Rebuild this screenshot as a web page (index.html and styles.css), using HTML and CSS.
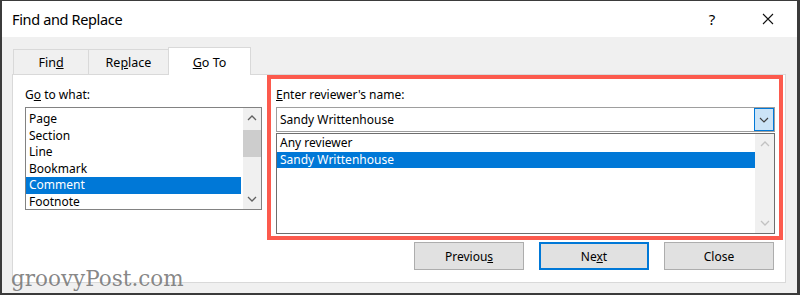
FILE: index.html
```html
<!DOCTYPE html>
<html lang="en">
<head>
    <meta charset="UTF-8">
    <title>Find and Replace</title>
    <link rel="stylesheet" href="styles.css">
</head>
<body>
    <div class="window">
        <div class="titlebar">
            <span class="title">Find and Replace</span>
            <span class="caption-btn help">?</span>
            <span class="caption-btn">
                <svg width="12" height="12" viewBox="0 0 12 12"><path d="M1 1 L11 11 M11 1 L1 11" stroke="#111" stroke-width="1.1" fill="none"/></svg>
            </span>
        </div>
        <div class="dialog">
            <div class="tabs">
                <div class="tab tab-find">Fin<u>d</u></div>
                <div class="tab tab-replace">Re<u>p</u>lace</div>
                <div class="tab active"><u>G</u>o To</div>
            </div>
            <div class="panel">
                <div class="panel-main">
                    <div class="goto-col">
                        <label class="field-label">G<u>o</u> to what:</label>
                        <div class="listbox goto-list">
                            <ul class="items">
                                <li>Page</li>
                                <li>Section</li>
                                <li>Line</li>
                                <li>Bookmark</li>
                                <li class="selected">Comment</li>
                                <li>Footnote</li>
                            </ul>
                            <div class="scrollbar">
                                <div class="sb-btn">
                                    <svg width="10" height="6" viewBox="0 0 10 6"><polyline points="1,5 5,1 9,5" stroke="#606060" stroke-width="1.3" fill="none"/></svg>
                                </div>
                                <div class="sb-track"><div class="sb-thumb"></div></div>
                                <div class="sb-btn">
                                    <svg width="10" height="6" viewBox="0 0 10 6"><polyline points="1,1 5,5 9,1" stroke="#606060" stroke-width="1.3" fill="none"/></svg>
                                </div>
                            </div>
                        </div>
                    </div>
                    <div class="reviewer-box">
                        <label class="field-label"><u>E</u>nter reviewer's name:</label>
                        <div class="combo">
                            <span class="combo-text">Sandy Writtenhouse</span>
                            <span class="combo-btn">
                                <svg width="10" height="6" viewBox="0 0 10 6"><polyline points="1,1 5,5 9,1" stroke="#404040" stroke-width="1.2" fill="none"/></svg>
                            </span>
                        </div>
                        <div class="listbox reviewer-list">
                            <ul class="items">
                                <li>Any reviewer</li>
                                <li class="selected">Sandy Writtenhouse</li>
                            </ul>
                            <div class="scrollbar disabled">
                                <div class="sb-btn">
                                    <svg width="10" height="6" viewBox="0 0 10 6"><polyline points="1,5 5,1 9,5" stroke="#c2c2c2" stroke-width="1.3" fill="none"/></svg>
                                </div>
                                <div class="sb-track"></div>
                                <div class="sb-btn">
                                    <svg width="10" height="6" viewBox="0 0 10 6"><polyline points="1,1 5,5 9,1" stroke="#c2c2c2" stroke-width="1.3" fill="none"/></svg>
                                </div>
                            </div>
                        </div>
                    </div>
                </div>
                <div class="buttons">
                    <button class="btn">Previou<u>s</u></button>
                    <button class="btn default">Ne<u>x</u>t</button>
                    <button class="btn">Close</button>
                </div>
            </div>
        </div>
        <div class="watermark">groovyPost.com</div>
    </div>
</body>
</html>
```

FILE: styles.css
```css
* {
    box-sizing: border-box;
}

body {
    margin: 0;
    background-color: #fff;
    font-family: "Noto Sans", "Open Sans", sans-serif;
    font-size: 12px;
    color: #000;
}

.window {
    position: relative;
    width: 800px;
    height: 295px;
    border-style: solid;
    border-color: #3b3b3b;
    border-width: 1px 3px 2px 2px;
    background-color: #f0f0f0;
    overflow: hidden;
}

.titlebar {
    height: 36px;
    background-color: #fff;
    display: flex;
    align-items: center;
    padding: 0 6px 1px 10px;
}

.title {
    font-size: 14.5px;
    letter-spacing: -0.35px;
}

.caption-btn {
    width: 46px;
    height: 30px;
    display: flex;
    align-items: center;
    justify-content: center;
}

.help {
    margin-left: auto;
    margin-right: 10px;
    font-size: 15px;
}

.dialog {
    padding: 10px 11px 0 10px;
}

.tabs {
    display: flex;
    align-items: flex-end;
    height: 27px;
    padding-left: 1px;
}

.tab {
    height: 25px;
    border: 1px solid #d9d9d9;
    border-bottom: none;
    background-color: #f0f0f0;
    text-align: center;
    padding-top: 5px;
    font-size: 12.5px;
    line-height: 16px;
}

.tab-find {
    width: 76px;
}

.tab-replace {
    width: 81px;
    margin-left: -1px;
}

.tab.active {
    position: relative;
    z-index: 1;
    width: 83px;
    height: 28px;
    margin-left: -1px;
    margin-bottom: -1px;
    padding-top: 7px;
    background-color: #fff;
}

.panel {
    height: 209px;
    background-color: #fff;
    border: 1px solid #d9d9d9;
}

.panel-main {
    display: flex;
    padding-left: 12px;
}

.goto-col {
    width: 237px;
    padding-top: 12px;
}

.field-label {
    display: block;
    line-height: 16px;
    margin-bottom: 4px;
}

.listbox {
    display: flex;
    background-color: #fff;
    overflow: hidden;
}

.items {
    flex: 1;
    list-style: none;
    margin: 0;
    padding: 0;
}

.items li {
    line-height: 16.5px;
    padding-left: 3px;
    white-space: nowrap;
}

.items li.selected {
    background-color: #0078d7;
    color: #fff;
}

.goto-list {
    height: 103px;
    border: 1px solid #828282;
}

.goto-list .items {
    padding: 3px 2px 0 0;
}

.scrollbar {
    width: 18px;
    display: flex;
    flex-direction: column;
    background-color: #f0f0f0;
}

.sb-btn {
    height: 20px;
    display: flex;
    align-items: center;
    justify-content: center;
}

.sb-track {
    flex: 1;
}

.sb-thumb {
    height: 27px;
    margin-top: 2px;
    background-color: #cdcdcd;
}

.reviewer-box {
    width: 516px;
    height: 165px;
    margin-left: 5px;
    border: 4px solid #fc5a4d;
    padding: 8px 4px 2px 5px;
}

.combo {
    display: flex;
    height: 25px;
    border: 1px solid #9e9e9e;
}

.combo-text {
    padding-left: 3px;
    line-height: 23px;
}

.combo-btn {
    margin-left: auto;
    width: 20px;
    display: flex;
    align-items: center;
    justify-content: center;
    background-color: #cce4f7;
    border: 1px solid #0078d7;
}

.reviewer-list {
    height: 101px;
    margin-top: 1px;
    border: 1px solid #6e6e6e;
}

.reviewer-list .items {
    padding-top: 1px;
}

.reviewer-list .scrollbar {
    width: 19px;
}

.buttons {
    display: flex;
    justify-content: flex-end;
    gap: 15px;
    margin-top: 2px;
    padding-right: 11px;
}

.btn {
    width: 110px;
    height: 28px;
    background-color: #e1e1e1;
    border: 1px solid #adadad;
    font-family: "Noto Sans", "Open Sans", sans-serif;
    font-size: 12px;
    color: #000;
    padding: 0;
}

.btn.default {
    border: 2px solid #0078d7;
}

.watermark {
    position: absolute;
    left: 9px;
    bottom: 2px;
    font-family: "DejaVu Serif", "Liberation Serif", serif;
    font-size: 21.5px;
    color: rgba(120, 120, 120, 0.9);
}
```
